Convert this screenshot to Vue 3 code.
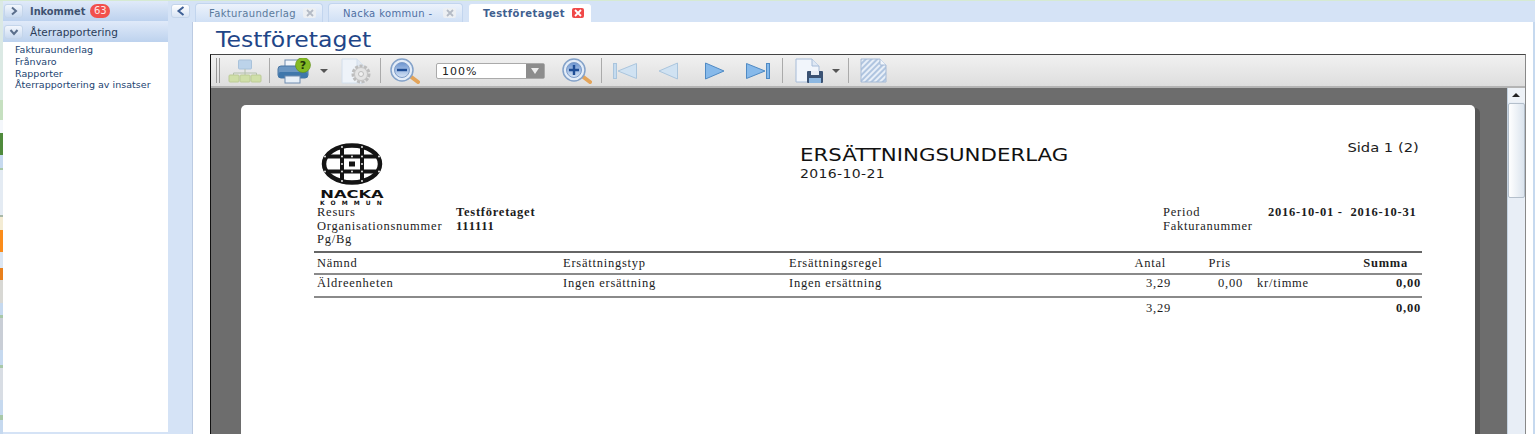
<script setup>
const menuLinks = ['Fakturaunderlag', 'Frånvaro', 'Rapporter', 'Återrapportering av insatser']

const tabs = [
  { label: 'Fakturaunderlag', active: false },
  { label: 'Nacka kommun -', active: false },
  { label: 'Testföretaget', active: true }
]

// bits of the window behind, showing down the left edge
const edgeBlocks = [
  { height: 100, color: '#dbe9e4' },
  { height: 20, color: '#c6e0c0' },
  { height: 13, color: '#f4f7fb' },
  { height: 22, color: '#4f8a3c' },
  { height: 13, color: '#c6d9ef' },
  { height: 2, color: '#a8c8a8' },
  { height: 45, color: '#e4ebf3' },
  { height: 2, color: '#a8b8a8' },
  { height: 13, color: '#f4ecd4' },
  { height: 22, color: '#fb8c1a' },
  { height: 16, color: '#dbe6f3' },
  { height: 12, color: '#e8801c' },
  { height: 23, color: '#d8d8d4' },
  { height: 12, color: '#c6d9ef' },
  { height: 3, color: '#a8c8a8' },
  { height: 32, color: '#c9ced6' },
  { height: 15, color: '#c6d9ef' },
  { height: 3, color: '#a8c8a8' },
  { height: 32, color: '#d8dde4' },
  { height: 15, color: '#c6d9ef' },
  { height: 5, color: '#a8c8a8' },
  { height: 14, color: '#c6d9ef' }
]
</script>

<template>
  <div class="app">
    <div class="edge">
      <span
        v-for="(b, i) in edgeBlocks"
        :key="i"
        class="edge-block"
        :style="{ height: b.height + 'px', background: b.color }"
      ></span>
    </div>

    <aside class="sidebar">
      <div class="acc-head">
        <span class="acc-btn">
          <svg width="10" height="10" viewBox="0 0 10 10"><path d="M3 1.500 7 5 3 8.500" fill="none" stroke="#5b6f8c" stroke-width="2"/></svg>
        </span>
        <span class="acc-title">Inkommet</span>
        <span class="badge">63</span>
      </div>
      <div class="acc-head second">
        <span class="acc-btn">
          <svg width="10" height="10" viewBox="0 0 10 10"><path d="M1.500 3 5 7 8.500 3" fill="none" stroke="#5b6f8c" stroke-width="2"/></svg>
        </span>
        <span class="acc-title light">Återrapportering</span>
      </div>
      <ul class="menu">
        <li v-for="link in menuLinks" :key="link">{{ link }}</li>
      </ul>
    </aside>

    <div class="gutter">
      <span class="acc-btn collapse">
        <svg width="10" height="10" viewBox="0 0 10 10"><path d="M7.500 1 2.500 5 7.500 9" fill="none" stroke="#3d5f95" stroke-width="2"/></svg>
      </span>
    </div>

    <main class="main">
      <div class="tabbar">
        <div v-for="tab in tabs" :key="tab.label" class="tab" :class="{ active: tab.active }">
          <span class="tab-label">{{ tab.label }}</span>
          <span class="tab-close">
            <svg width="8" height="8" viewBox="0 0 8 8"><path d="M1 1 7 7M7 1 1 7" :stroke="tab.active ? '#fff' : '#b4bbc6'" stroke-width="1.800"/></svg>
          </span>
        </div>
      </div>

      <div class="content">
        <h1 class="title"><span>Testföretaget</span></h1>

        <div class="viewer">
          <div class="toolbar">
            <span class="grip"></span>
            <!-- hierarki -->
            <svg class="tool t-org" width="34" height="24" viewBox="0 0 34 24">
              <rect x="10.500" y="1" width="13" height="9" rx="1" fill="#bcd3ea" stroke="#a9c2da"/>
              <path d="M17 10v4M5.500 17v-3h23v3M17 14v3" fill="none" stroke="#b4c0ac"/>
              <rect x="1" y="16" width="10" height="7" rx="1" fill="#cfdfa8" stroke="#bccb96"/>
              <rect x="12" y="16" width="10" height="7" rx="1" fill="#cfdfa8" stroke="#bccb96"/>
              <rect x="23" y="16" width="10" height="7" rx="1" fill="#cfdfa8" stroke="#bccb96"/>
            </svg>
            <span class="sep s-1"></span>
            <!-- skrivare -->
            <svg class="tool t-print" width="36" height="26" viewBox="0 0 36 26">
              <rect x="8" y="2" width="16" height="8" fill="#f2f6fb" stroke="#6f8cb0"/>
              <rect x="1" y="8" width="30" height="12" rx="3" fill="#6c97c2" stroke="#4a76a3"/>
              <rect x="1.500" y="14" width="29" height="6" rx="2" fill="#3f77ab"/>
              <rect x="8" y="18" width="15" height="7" fill="#e8f0f8" stroke="#6f8cb0"/>
              <circle cx="26" cy="7" r="7.500" fill="#84ba24" stroke="#5c8c12" stroke-width=".6"/>
              <text x="26" y="11" class="help-mark">?</text>
            </svg>
            <span class="drop-arrow a-1"></span>
            <!-- dokument med kugghjul -->
            <svg class="tool t-gear" width="31" height="26" viewBox="0 0 31 26">
              <path d="M1 1h15l7 7v17H1z" fill="#eef3f9" stroke="#d2deeb"/>
              <path d="M16 1v7h7" fill="#e2e9f2" stroke="#d2deeb"/>
              <circle cx="20" cy="16" r="8" fill="#e0e0e0" stroke="#bdbdbd" stroke-width="3" stroke-dasharray="3 1.500"/>
              <circle cx="20" cy="16" r="6.500" fill="#e4e4e4" stroke="#c4c4c4"/>
              <circle cx="20" cy="16" r="2.500" fill="#f0f0f0" stroke="#bdbdbd"/>
            </svg>
            <span class="sep s-2"></span>
            <svg class="tool t-zoomout" width="31" height="26" viewBox="0 0 31 26">
              <defs>
                <linearGradient id="lens" x1="0" y1="0" x2="0" y2="1">
                  <stop offset="0" stop-color="#6b94cf"/>
                  <stop offset="1" stop-color="#d5e3f5"/>
                </linearGradient>
              </defs>
              <path d="M21 18 29 24" stroke="#e3a45a" stroke-width="4" stroke-linecap="round"/>
              <circle cx="13" cy="12" r="11" fill="#e4edf8" stroke="#84a2c9" stroke-width="1.500"/>
              <circle cx="13" cy="12" r="7.500" fill="url(#lens)" stroke="#7d9cc8"/>
              <path d="M8 12h10" stroke="#1f4e96" stroke-width="2.400"/>
            </svg>
            <div class="zoom-select">
              <span class="zoom-value">100%</span>
              <span class="zoom-btn"></span>
            </div>
            <svg class="tool t-zoomin" width="31" height="26" viewBox="0 0 31 26">
              <path d="M21 18 29 24" stroke="#e3a45a" stroke-width="4" stroke-linecap="round"/>
              <circle cx="13" cy="12" r="11" fill="#e4edf8" stroke="#84a2c9" stroke-width="1.500"/>
              <circle cx="13" cy="12" r="7.500" fill="url(#lens)" stroke="#7d9cc8"/>
              <path d="M8 12h10M13 7v10" stroke="#1f4e96" stroke-width="2.400"/>
            </svg>
            <span class="sep s-3"></span>
            <svg class="tool t-first" width="24" height="18" viewBox="0 0 24 18">
              <rect x="0.500" y="1.500" width="3" height="15" fill="#c5dbef" stroke="#aac5dd"/>
              <path d="M23.500 1.500v15L5 9z" fill="#d0e2f2" stroke="#aac5dd"/>
            </svg>
            <svg class="tool t-prev" width="20" height="18" viewBox="0 0 20 18">
              <path d="M19.500 1v16L1 9z" fill="#d0e2f2" stroke="#aac5dd"/>
            </svg>
            <svg class="tool t-next" width="20" height="18" viewBox="0 0 20 18">
              <path d="M.5 1v16L19 9z" fill="#86b9ea" stroke="#4f8ac4"/>
            </svg>
            <svg class="tool t-last" width="24" height="18" viewBox="0 0 24 18">
              <path d="M.5 1.500v15L19 9z" fill="#86b9ea" stroke="#4f8ac4"/>
              <rect x="20.500" y="1.500" width="3" height="15" fill="#86b9ea" stroke="#4f8ac4"/>
            </svg>
            <span class="sep s-4"></span>
            <svg class="tool t-save" width="28" height="25" viewBox="0 0 28 25">
              <path d="M1 1h16l7 7v16H1z" fill="#f1f5fb" stroke="#a7bcd8"/>
              <path d="M17 1v7h7" fill="#dfe8f4" stroke="#a7bcd8"/>
              <rect x="12" y="13" width="16" height="12" rx="1" fill="#3b5273"/>
              <rect x="16" y="13" width="8" height="4" fill="#e9eef5"/>
              <rect x="14" y="20" width="12" height="5" fill="#8db8e2"/>
            </svg>
            <span class="drop-arrow a-2"></span>
            <span class="sep s-5"></span>
            <svg class="tool t-hatch" width="27" height="25" viewBox="0 0 27 25">
              <defs>
                <pattern id="hatch" width="4" height="4" patternUnits="userSpaceOnUse" patternTransform="rotate(-45)">
                  <rect width="4" height="4" fill="#e8eff8"/>
                  <rect width="4" height="2" fill="#b0c5e0"/>
                </pattern>
              </defs>
              <path d="M1 1h19l6 6v17H1z" fill="url(#hatch)" stroke="#a5bad6"/>
              <path d="M20 1v6h6" fill="#f2f6fb" stroke="#a5bad6"/>
            </svg>
          </div>

          <div class="stage">
            <div class="stage-inner">
              <div class="doc">
                <div class="doc-top">
                  <div class="logo">
                    <svg width="64" height="44" viewBox="0 0 64 44">
                      <defs>
                        <clipPath id="logo-clip">
                          <ellipse cx="32" cy="22" rx="30" ry="20.500"/>
                        </clipPath>
                      </defs>
                      <g clip-path="url(#logo-clip)">
                        <rect width="64" height="44" fill="#fff"/>
                        <g fill="#141414">
                          <rect x="20" y="0" width="4" height="44"/>
                          <rect x="40" y="0" width="4" height="44"/>
                          <rect x="0" y="12.500" width="64" height="4"/>
                          <rect x="0" y="27.500" width="64" height="4"/>
                          <rect x="29" y="19.500" width="6" height="5"/>
                        </g>
                      </g>
                      <ellipse cx="32" cy="22" rx="28" ry="18.500" fill="none" stroke="#141414" stroke-width="4.500"/>
                      <g fill="#fff">
                        <circle cx="22" cy="14.500" r=".9"/>
                        <circle cx="42" cy="14.500" r=".9"/>
                        <circle cx="22" cy="29.500" r=".9"/>
                        <circle cx="42" cy="29.500" r=".9"/>
                        <circle cx="32" cy="14.500" r=".9"/>
                        <circle cx="32" cy="29.500" r=".9"/>
                        <circle cx="22" cy="22" r=".9"/>
                        <circle cx="42" cy="22" r=".9"/>
                        <circle cx="22" cy="5" r=".9"/>
                        <circle cx="42" cy="5" r=".9"/>
                        <circle cx="22" cy="39" r=".9"/>
                        <circle cx="42" cy="39" r=".9"/>
                        <circle cx="5" cy="14.500" r=".9"/>
                        <circle cx="59" cy="14.500" r=".9"/>
                        <circle cx="5" cy="29.500" r=".9"/>
                        <circle cx="59" cy="29.500" r=".9"/>
                      </g>
                    </svg>
                    <div class="logo-name">NACKA</div>
                    <div class="logo-sub">KOMMUN</div>
                  </div>
                  <div class="doc-heading">
                    <div class="doc-title">ERSÄTTNINGSUNDERLAG</div>
                    <div class="doc-date">2016-10-21</div>
                  </div>
                  <div class="doc-page">Sida 1 (2)</div>
                </div>

                <div class="meta">
                  <div class="meta-left">
                    <span>Resurs</span><b>Testföretaget</b>
                    <span>Organisationsnummer</span><b>111111</b>
                    <span>Pg/Bg</span><b></b>
                  </div>
                  <div class="meta-right">
                    <span>Period</span><b>2016-10-01 -&nbsp; 2016-10-31</b>
                    <span>Fakturanummer</span><b></b>
                  </div>
                </div>

                <div class="row head">
                  <span class="c1">Nämnd</span>
                  <span class="c2">Ersättningstyp</span>
                  <span class="c3">Ersättningsregel</span>
                  <span class="c4 head-antal">Antal</span>
                  <span class="c5 head-pris">Pris</span>
                  <span class="c6"></span>
                  <b class="c7 head-summa">Summa</b>
                </div>
                <div class="row body">
                  <span class="c1">Äldreenheten</span>
                  <span class="c2">Ingen ersättning</span>
                  <span class="c3">Ingen ersättning</span>
                  <span class="c4">3,29</span>
                  <span class="c5">0,00</span>
                  <span class="c6">kr/timme</span>
                  <b class="c7">0,00</b>
                </div>
                <div class="row total">
                  <span class="c1"></span>
                  <span class="c2"></span>
                  <span class="c3"></span>
                  <span class="c4">3,29</span>
                  <span class="c5"></span>
                  <span class="c6"></span>
                  <b class="c7">0,00</b>
                </div>
              </div>
            </div>

            <div class="scrollbar">
              <div class="scroll-up"></div>
              <div class="thumb"></div>
            </div>
          </div>
        </div>
      </div>
    </main>
  </div>
</template>

<style>
html, body {
  margin: 0;
  overflow: hidden;
}
</style>

<style scoped>
.app {
  display: flex;
  width: 1535px;
  height: 434px;
  overflow: hidden;
  box-sizing: border-box;
  border-top: 1px solid #d6ead2;
  background: #d5e3f6;
  font-family: "DejaVu Sans", sans-serif;
}

.edge {
  width: 3px;
  flex: none;
  margin-top: -1px;
}
.edge-block {
  display: block;
  width: 3px;
}

.sidebar {
  width: 165px;
  flex: none;
  background: #fff;
  border-bottom: 2px solid #d5e3f6;
  box-sizing: border-box;
}
.acc-head {
  display: flex;
  align-items: center;
  height: 20px;
  padding-left: 1px;
  box-sizing: border-box;
  background: linear-gradient(#e0eaf9, #bdd2ee);
}
.acc-head.second {
  height: 21px;
}
.acc-btn {
  display: flex;
  align-items: center;
  justify-content: center;
  width: 19px;
  height: 14px;
  border-radius: 3px;
  background: linear-gradient(#f3f7fd, #c9daf0);
  border: 1px solid #c4d5ea;
  box-sizing: border-box;
}
.acc-title {
  margin-left: 7px;
  font-size: 9.800px;
  font-weight: 700;
  color: #3f5270;
}
.acc-title.light {
  font-size: 10.500px;
  font-weight: 400;
  color: #2a3c58;
}
.badge {
  margin-left: 5px;
  width: 20px;
  height: 14px;
  line-height: 14px;
  border-radius: 7px;
  background: #f2504c;
  color: #fde8e6;
  font-size: 10px;
  text-align: center;
}
.menu {
  list-style: none;
  margin: 0;
  padding: 2px 0 0 12px;
  font-size: 9.500px;
  line-height: 11.800px;
  letter-spacing: 0.030px;
  color: #223f70;
}

.gutter {
  width: 24px;
  flex: none;
  padding: 3px 0 0 3px;
  box-sizing: border-box;
}
.collapse {
  background: linear-gradient(#fff, #d8e4f4);
}

.main {
  flex: 1;
  display: flex;
  flex-direction: column;
  min-width: 0;
}
.tabbar {
  display: flex;
  align-items: flex-end;
  gap: 5px;
  height: 21px;
  flex: none;
  padding-left: 3px;
  box-sizing: border-box;
  background: #d5e3f6;
}
.tab {
  display: flex;
  align-items: center;
  justify-content: space-between;
  height: 19px;
  width: 128px;
  padding: 0 6px 0 13px;
  box-sizing: border-box;
  border: 1px solid #c2d5ee;
  border-bottom: 0;
  border-radius: 4px 4px 0 0;
  background: linear-gradient(#ecf2fb, #d0e0f5);
  font-size: 10px;
  letter-spacing: 0.350px;
  color: #5b7a9c;
}
.tab:nth-child(2) {
  width: 135px;
  padding-left: 14px;
  color: #4f6fa3;
}
.tab.active {
  width: 124px;
  background: #fff;
  border-color: #d5e3f6;
  font-weight: 700;
  letter-spacing: 0.450px;
  color: #3f5f8f;
  padding: 0 7px 0 14px;
}
.tab-close {
  display: flex;
  align-items: center;
  justify-content: center;
  width: 13px;
  height: 10px;
  border-radius: 2px;
  background: #eceff3;
}
.tab.active .tab-close {
  width: 12px;
  background: #f04848;
}

.content {
  flex: 1;
  min-height: 0;
  display: flex;
  flex-direction: column;
  background: #fff;
  padding: 0 7px 0 18px;
  border-right: 2px solid #c6d9ef;
  box-shadow: inset 1px 0 0 #bccbe2;
}
.title {
  margin: 0;
  flex: none;
  height: 32px;
  padding: 6px 0 0 6px;
  box-sizing: border-box;
  font-size: 20.500px;
  line-height: 24px;
  font-weight: 400;
  color: #1f4688;
}
.title span {
  display: inline-block;
  transform: scaleX(1.150);
  transform-origin: left;
}

.viewer {
  flex: 1;
  min-height: 0;
  display: flex;
  flex-direction: column;
  border-top: 1px solid #444;
  border-left: 1px solid #111;
  border-right: 1px solid #888;
}
.toolbar {
  display: flex;
  align-items: center;
  height: 33px;
  flex: none;
  box-sizing: border-box;
  padding-left: 5px;
  background: linear-gradient(#f1f1f1, #dedede);
  border-bottom: 2px solid #b4b4b4;
}
.grip {
  width: 4px;
  height: 25px;
  box-sizing: border-box;
  border-left: 1px solid #999;
  border-right: 1px solid #999;
}
.sep {
  width: 1px;
  height: 25px;
  background: #aaa;
}
.tool {
  flex: none;
}
.t-org { margin-left: 8px; }
.s-1 { margin-left: 7px; }
.t-print { margin-left: 7px; }
.a-1 { margin-left: 7px; }
.t-gear { margin-left: 13px; }
.s-2 { margin-left: 8px; }
.t-zoomout { margin-left: 8px; }
.t-zoomin { margin-left: 16px; }
.s-3 { margin-left: 9px; }
.t-first { margin-left: 11px; }
.t-prev { margin-left: 21px; }
.t-next { margin-left: 27px; }
.t-last { margin-left: 21px; }
.s-4 { margin-left: 12px; }
.t-save { margin-left: 12px; }
.a-2 { margin-left: 9px; }
.s-5 { margin-left: 8px; }
.t-hatch { margin-left: 11px; }

.help-mark {
  font-size: 11px;
  font-weight: 700;
  text-anchor: middle;
  fill: #22340a;
}
.drop-arrow {
  flex: none;
  width: 0;
  height: 0;
  border-left: 4px solid transparent;
  border-right: 4px solid transparent;
  border-top: 4px solid #555;
}
.zoom-select {
  display: flex;
  align-items: center;
  flex: none;
  width: 109px;
  height: 16px;
  margin-left: 16px;
  border: 1px solid #aaa;
  border-radius: 2px;
  background: #fff;
  box-sizing: border-box;
}
.zoom-value {
  flex: 1;
  padding: 1px 0 0 5px;
  font-size: 11px;
  letter-spacing: 1px;
  color: #222;
}
.zoom-btn {
  position: relative;
  width: 18px;
  height: 14px;
  background: #8d8d8d;
}
.zoom-btn::after {
  content: "";
  position: absolute;
  left: 4.500px;
  top: 4px;
  border-left: 4.500px solid transparent;
  border-right: 4.500px solid transparent;
  border-top: 6px solid #eee;
}

.stage {
  flex: 1;
  min-height: 0;
  display: flex;
  background: #6d6d6d;
}
.stage-inner {
  flex: 1;
  min-width: 0;
  padding: 17px 0 0 30px;
  overflow: hidden;
}
.doc {
  width: 1234px;
  height: 400px;
  background: #fff;
  border-radius: 5px 5px 0 0;
  box-shadow: 5px 3px 0 #565656;
  padding: 35px 53px 0 76px;
  box-sizing: border-box;
  color: #1c1c1c;
  font-family: "Liberation Serif", serif;
  font-size: 12.500px;
}
.scrollbar {
  width: 18px;
  flex: none;
  background: #e8eef6;
  border-left: 1px solid #c4d2e0;
  box-sizing: border-box;
}
.scroll-up {
  position: relative;
  height: 14px;
  background: #eef2f7;
}
.scroll-up::after {
  content: "";
  position: absolute;
  left: 4px;
  top: 5px;
  border-left: 4px solid transparent;
  border-right: 4px solid transparent;
  border-bottom: 4px solid #222;
}
.thumb {
  height: 95px;
  margin-top: 1px;
  background: linear-gradient(90deg, #fff, #dbe4ee);
  border: 1px solid #b4bfcb;
  border-radius: 2px;
  box-sizing: border-box;
}

.doc-top {
  display: flex;
  height: 65px;
}
.logo {
  width: 64px;
  flex: none;
  margin-left: 3px;
  padding-top: 2px;
  font-family: "DejaVu Sans", sans-serif;
  color: #111;
}
.logo svg {
  display: block;
}
.logo-name {
  font-weight: 700;
  font-size: 11px;
  line-height: 9px;
  margin-top: 4px;
  text-align: center;
  transform: scaleX(1.480);
}
.logo-sub {
  font-size: 6px;
  font-weight: 700;
  line-height: 7px;
  letter-spacing: 6.100px;
  white-space: nowrap;
}
.doc-heading {
  margin-left: 416px;
  font-family: "DejaVu Sans", sans-serif;
  transform: scaleX(1.218);
  transform-origin: left;
  white-space: nowrap;
}
.doc-title {
  font-size: 17.500px;
  line-height: 20px;
  margin-top: 5px;
  color: #111;
}
.doc-date {
  font-size: 11.500px;
  line-height: 14px;
  margin-top: 2px;
  letter-spacing: 0.300px;
}
.doc-page {
  margin-left: auto;
  margin-right: 3px;
  margin-top: 1px;
  height: 16px;
  font-family: "DejaVu Sans", sans-serif;
  font-size: 11.500px;
  transform: scaleX(1.280);
  transform-origin: right;
  white-space: nowrap;
}

.meta {
  display: flex;
  justify-content: space-between;
  height: 46px;
  padding-right: 7px;
  letter-spacing: 0.760px;
}
.meta-left,
.meta-right {
  display: grid;
  grid-auto-rows: 13.500px;
  align-content: start;
  white-space: nowrap;
}
.meta-left {
  grid-template-columns: 139px auto;
}
.meta-right {
  grid-template-columns: 105px 147px;
}

.row {
  display: grid;
  grid-template-columns: 246px 226px 300px 85px 72px 80px 1fr;
  align-items: center;
  margin-left: -3px;
  border-top: 2px solid #8a8a8a;
  height: 22px;
  box-sizing: border-box;
  letter-spacing: 0.760px;
  white-space: nowrap;
}
.row.head {
  border-top-color: #666;
}
.row.body {
  height: 23px;
  padding-bottom: 4px;
}
.row > * {
  padding-left: 3px;
  min-width: 0;
}
.c4, .c5 { text-align: right; }
.c6 { padding-left: 14px !important; }
.c7 {
  text-align: right;
  padding-right: 1px;
}
.head-antal { padding-right: 5px; }
.head-pris { padding-right: 12px; }
.head-summa { padding-right: 14px; }
</style>
